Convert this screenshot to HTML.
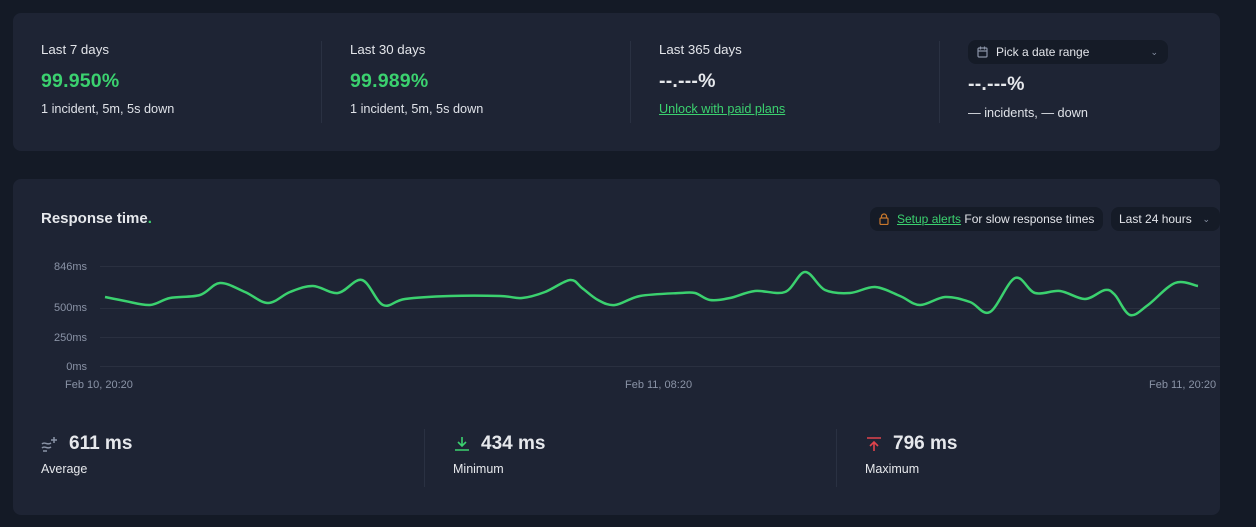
<!DOCTYPE html>
<html><head><meta charset="utf-8"><style>
*{box-sizing:border-box;margin:0;padding:0}
body{width:1256px;height:527px;background:#141a26;font-family:"Liberation Sans",sans-serif;color:#e6e8ec;position:relative;overflow:hidden}
.card{position:absolute;left:13px;width:1207px;background:#1e2434;border-radius:8px}
.c1{top:13px;height:138px}
.c2{top:179px;height:336px}
.col{position:absolute;top:29px}
.lbl{font-size:13.3px;color:#e3e5ea}
.big{font-size:19.5px;font-weight:bold;margin-top:13px;letter-spacing:.2px}
.green{color:#3bd16f}
.sub{font-size:12.7px;margin-top:9px;color:#dfe2e8}
.vl{position:absolute;width:1px;background:#2a3142}
.pill{position:absolute;background:#151b27;border-radius:8px;font-size:12px;color:#e3e5ea}
.ax{position:absolute;font-size:11px;color:#8a93a6}
.stat .v{font-size:19px;font-weight:bold;display:flex;align-items:center;gap:8px}
.stat{position:absolute}
.stat .l{font-size:12.5px;margin-top:7px}
</style></head><body>
<div class="card c1">
 <div class="col" style="left:28px"><div class="lbl">Last 7 days</div><div class="big green">99.950%</div><div class="sub">1 incident, 5m, 5s down</div></div>
 <div class="vl" style="left:308px;top:28px;height:82px"></div>
 <div class="col" style="left:337px"><div class="lbl">Last 30 days</div><div class="big green">99.989%</div><div class="sub">1 incident, 5m, 5s down</div></div>
 <div class="vl" style="left:617px;top:28px;height:82px"></div>
 <div class="col" style="left:646px"><div class="lbl">Last 365 days</div><div class="big">--.---%</div><div class="sub" style="color:#3bd16f;text-decoration:underline">Unlock with paid plans</div></div>
 <div class="vl" style="left:926px;top:28px;height:82px"></div>
 <div class="pill" style="left:955px;top:27px;width:200px;height:24px;line-height:24px;padding-left:28px">
  <svg style="position:absolute;left:9px;top:6px" width="11" height="12" viewBox="0 0 11 12"><rect x="1" y="2" width="9" height="9" rx="1" fill="none" stroke="#8a93a6" stroke-width="1.2"/><path d="M1 5h9M3.5 0.5v3M7.5 0.5v3" stroke="#8a93a6" stroke-width="1.2"/></svg>
  Pick a date range<span style="position:absolute;right:10px;top:0;color:#8a93a6;font-size:9px">&#8964;</span></div>
 <div class="col" style="left:955px;top:60px"><div class="big" style="margin-top:0">--.---%</div><div class="sub" style="margin-top:10px">— incidents, — down</div></div>
</div>
<div class="card c2">
 <div style="position:absolute;left:28px;top:31px;font-size:15px;font-weight:bold">Response time<span style="color:#3bd16f">.</span></div>
 <div class="pill" style="left:857px;top:28px;width:233px;height:24px;line-height:24px;padding-left:27px;font-size:12px">
  <svg style="position:absolute;left:9px;top:6px" width="10" height="12" viewBox="0 0 10 12"><path d="M2.5 5V3.5a2.5 2.5 0 0 1 5 0V5" fill="none" stroke="#c9782c" stroke-width="1.2"/><rect x="1" y="5" width="8" height="6.5" rx="1" fill="none" stroke="#c9782c" stroke-width="1.2"/></svg>
  <span style="color:#3bd16f;text-decoration:underline">Setup alerts</span> For slow response times</div>
 <div class="pill" style="left:1098px;top:28px;width:109px;height:24px;line-height:24px;padding-left:8px">Last 24 hours<span style="position:absolute;right:10px;top:0;color:#8a93a6;font-size:9px">&#8964;</span></div>
 <div class="ax" style="right:1133px;top:82px">846ms</div>
 <div class="ax" style="right:1133px;top:123px">500ms</div>
 <div class="ax" style="right:1133px;top:153px">250ms</div>
 <div class="ax" style="right:1133px;top:182px">0ms</div>
 <div class="ax" style="left:52px;top:200px">Feb 10, 20:20</div>
 <div class="ax" style="left:612px;top:200px">Feb 11, 08:20</div>
 <div class="ax" style="left:1136px;top:200px">Feb 11, 20:20</div>
</div>
<svg style="position:absolute;left:0;top:0" width="1256" height="527">
 <g stroke="#2a3040" stroke-width="1"><path d="M100 266.5H1220M100 308.5H1220M100 337.5H1220M100 366.5H1220"/></g>
 <path id="ln" fill="none" stroke="#3bd16f" stroke-width="2.5" stroke-linejoin="round"/>
</svg>
<div class="stat" style="left:41px;top:433px"><div class="v"><svg width="20" height="16" viewBox="0 0 20 16"><path d="M1 8c3-3 5 2 9-1M1 12c3-3 5 2 9-1M2 15h4M13 1v6M10 4h6" fill="none" stroke="#8a93a6" stroke-width="1.5"/></svg>611 ms</div><div class="l">Average</div></div>
<div class="vl" style="left:424px;top:429px;height:58px"></div>
<div class="stat" style="left:453px;top:433px"><div class="v"><svg width="20" height="16" viewBox="0 0 20 16"><path d="M9 1v9M5 6l4 4 4-4M2 14h14" fill="none" stroke="#3bd16f" stroke-width="1.6"/></svg>434 ms</div><div class="l">Minimum</div></div>
<div class="vl" style="left:836px;top:429px;height:58px"></div>
<div class="stat" style="left:865px;top:433px"><div class="v"><svg width="20" height="16" viewBox="0 0 20 16"><path d="M2 2h14M9 15V6M5 10l4-4 4 4" fill="none" stroke="#e0434c" stroke-width="1.6"/></svg>796 ms</div><div class="l">Maximum</div></div>
<script>
var p=[[105,297],[125,301],[150,305],[170,298],[200,295],[220,283],[245,292],[268,303],[290,292],[313,286],[338,293],[362,280],[383,305],[405,299],[450,296],[500,296],[522,298],[545,292],[570,280],[582,288],[598,300],[615,305],[640,296],[680,293],[695,293],[710,300],[730,298],[755,291],[785,292],[805,272],[825,290],[850,293],[875,287],[900,296],[920,305],[945,297],[970,302],[990,312],[1015,278],[1035,293],[1060,291],[1085,299],[1105,290],[1115,295],[1130,315],[1148,305],[1175,283],[1198,286]];
var d="M"+p[0];for(var i=0;i<p.length-1;i++){var a=p[i-1]||p[i],b=p[i],c=p[i+1],e=p[i+2]||c;
d+=" C"+(b[0]+(c[0]-a[0])/6)+","+(b[1]+(c[1]-a[1])/6)+" "+(c[0]-(e[0]-b[0])/6)+","+(c[1]-(e[1]-b[1])/6)+" "+c;}
document.getElementById("ln").setAttribute("d",d);
</script>
</body></html>
